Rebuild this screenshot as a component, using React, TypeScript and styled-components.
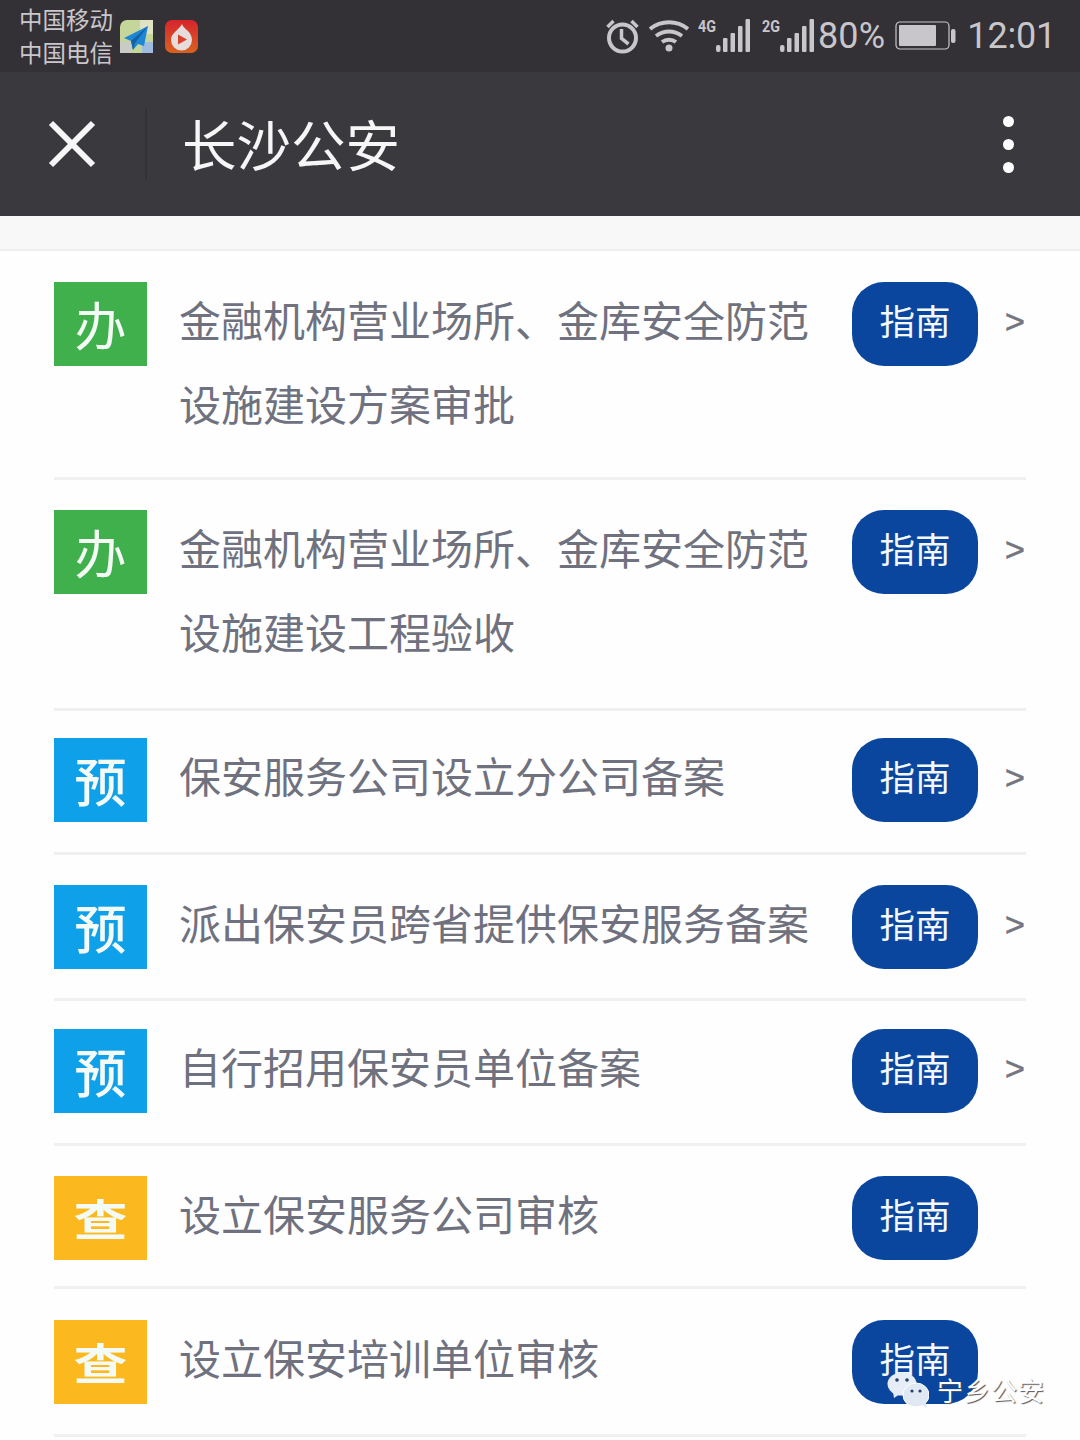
import React from "react";
import styled, { createGlobalStyle } from "styled-components";

const cjk = `"Noto Sans CJK SC", "Noto Sans", sans-serif`;

const GlobalStyle = createGlobalStyle`
  html, body {
    margin: 0;
    padding: 0;
    background: #fefefe;
    font-family: ${cjk};
  }
`;

const Page = styled.div`
  position: relative;
  width: 1080px;
  height: 1440px;
  overflow: hidden;
  background: #fefefe;
`;

const StatusBar = styled.div`
  display: flex;
  align-items: center;
  justify-content: space-between;
  height: 72px;
  padding: 0 24px 0 19px;
  box-sizing: border-box;
  background: #333036;
  color: #c8c6ca;
`;

const StatusLeft = styled.div`
  display: flex;
  align-items: center;
`;

const Carriers = styled.div`
  width: 101px;
  font-size: 23.5px;
  line-height: 33px;
  color: #c9c7cb;
`;

const AppIcon = styled.svg`
  display: block;
  width: 33px;
  height: 33px;
  margin-right: 12px;
`;

const StatusRight = styled.div`
  display: flex;
  align-items: center;
`;

const StatusIcon = styled.svg<{ $gap: number }>`
  display: block;
  margin-right: ${(p) => p.$gap}px;
  flex: none;
`;

const Percent = styled.span`
  font-family: Roboto, sans-serif;
  font-size: 36px;
  line-height: 72px;
  margin-right: 10px;
  letter-spacing: 0.2px;
`;

const Clock = styled.span`
  font-family: Roboto, sans-serif;
  font-size: 36px;
  line-height: 72px;
  letter-spacing: -0.2px;
`;

const NavBar = styled.div`
  display: flex;
  align-items: center;
  height: 144px;
  padding: 0 48px;
  box-sizing: border-box;
  background: #3a393e;
`;

const CloseIcon = styled.svg`
  display: block;
  width: 48px;
  height: 48px;
`;

const NavDivider = styled.div`
  width: 2px;
  height: 72px;
  margin: 0 35px 0 49px;
  background: #333237;
`;

const Title = styled.div`
  flex: 1;
  font-size: 54.5px;
  line-height: 72px;
  padding-bottom: 3px;
  color: #f6f6f7;
`;

const Dots = styled.div`
  display: flex;
  flex-direction: column;
  gap: 12px;
  margin-right: 18px;
`;

const Dot = styled.span`
  display: block;
  width: 11px;
  height: 11px;
  border-radius: 50%;
  background: #fff;
`;

const Gap = styled.div`
  height: 33px;
  background: #f8f8f8;
  border-bottom: 2px solid #eeeeee;
`;

const List = styled.div`
  padding: 0 54px;
`;

const Row = styled.div<{ $top: number; $bottom: number }>`
  display: flex;
  align-items: flex-start;
  padding: ${(p) => p.$top}px 0 ${(p) => p.$bottom}px;
  border-bottom: 3px solid #f0f0f1;
`;

const Tile = styled.div<{ $color: string }>`
  flex: none;
  width: 93px;
  height: 84px;
  margin-right: 32px;
  display: flex;
  align-items: center;
  justify-content: center;
  background: ${(p) => p.$color};
  color: #f4fbf6;
`;

const TileGlyph = styled.span<{ $squat?: boolean; $weight: number }>`
  font-size: ${(p) => (p.$squat ? 54 : 52)}px;
  font-weight: ${(p) => p.$weight};
  line-height: 82px;
  transform: ${(p) => (p.$squat ? "scaleY(0.8)" : "none")};
`;

const Label = styled.div`
  flex: none;
  width: 673px;
  font-size: 42px;
  line-height: 84px;
  color: #6f727e;
  margin: -5px 0 2px;
`;

const GuideButton = styled.div`
  flex: none;
  width: 126px;
  height: 84px;
  padding-bottom: 8px;
  box-sizing: border-box;
  border-radius: 32px;
  display: flex;
  align-items: center;
  justify-content: center;
  background: #0a469e;
  color: #f2f8fc;
  font-size: 35.5px;
  line-height: 76px;
`;

const Chevron = styled.div`
  flex: none;
  margin-left: 27px;
  font-family: "Liberation Sans", sans-serif;
  font-size: 34px;
  line-height: 78px;
  color: #74767f;
  -webkit-text-stroke: 0.6px #74767f;
`;

const Watermark = styled.div`
  position: absolute;
  left: 887px;
  top: 1372px;
  display: flex;
  align-items: center;
`;

const WatermarkText = styled.span`
  margin-left: 8px;
  font-size: 26px;
  line-height: 36px;
  letter-spacing: 1px;
  color: #fff;
  text-shadow: 1px 1px 1px #55555a;
`;

const rows = [
  { tag: "办", weight: 400, color: "#40b04c", lines: ["金融机构营业场所、金库安全防范", "设施建设方案审批"], top: 31, bottom: 30, arrow: true },
  { tag: "办", weight: 400, color: "#40b04c", lines: ["金融机构营业场所、金库安全防范", "设施建设工程验收"], top: 30, bottom: 33, arrow: true },
  { tag: "预", weight: 500, color: "#0fa0ea", lines: ["保安服务公司设立分公司备案"], top: 27, bottom: 30, arrow: true },
  { tag: "预", weight: 500, color: "#0fa0ea", lines: ["派出保安员跨省提供保安服务备案"], top: 30, bottom: 29, arrow: true },
  { tag: "预", weight: 500, color: "#0fa0ea", lines: ["自行招用保安员单位备案"], top: 28, bottom: 30, arrow: true },
  { tag: "查", weight: 700, color: "#fbb91f", lines: ["设立保安服务公司审核"], top: 30, bottom: 26, arrow: false },
  { tag: "查", weight: 700, color: "#fbb91f", lines: ["设立保安培训单位审核"], top: 31, bottom: 30, arrow: false },
];

function SignalIcon({ label, gap }: { label: string; gap: number }) {
  return (
    <StatusIcon $gap={gap} width="53" height="36" viewBox="0 0 53 36">
      <text x="0" y="14" fontFamily="Roboto, sans-serif" fontSize="16" fontWeight="700" fill="#c8c6ca" textLength="18" lengthAdjust="spacingAndGlyphs">
        {label}
      </text>
      <rect x="18" y="27" width="4.500" height="7" rx="2" fill="#c8c6ca" />
      <rect x="25" y="20" width="4.500" height="14" rx="1" fill="#c8c6ca" />
      <rect x="32.500" y="15" width="4.500" height="19" rx="1" fill="#c8c6ca" />
      <rect x="40" y="8" width="4.500" height="26" rx="1" fill="#c8c6ca" />
      <rect x="47.500" y="1" width="4.500" height="33" rx="1" fill="#c8c6ca" />
    </StatusIcon>
  );
}

export default function App() {
  return (
    <Page>
      <GlobalStyle />
      <StatusBar>
        <StatusLeft>
          <Carriers>
            中国移动
            <br />
            中国电信
          </Carriers>
          <AppIcon viewBox="0 0 33 33">
            <rect width="33" height="33" rx="7" fill="#c5d69a" />
            <path d="M20 0h13v14H20z" fill="#dfe3c4" />
            <path d="M0 22h12v11H0z" fill="#c9ccc4" />
            <path d="M22 22h11v11H22z" fill="#9dbce0" />
            <path d="M28 6 4 18l7 3 2 9 5-6 6 2z" fill="#1e86d6" />
            <path d="M28 6 11 21l2 9 2-7z" fill="#15609f" />
          </AppIcon>
          <AppIcon viewBox="0 0 33 33">
            <defs>
              <linearGradient id="flame" x1="0" y1="0" x2="0" y2="1">
                <stop offset="0" stopColor="#d6252d" />
                <stop offset="1" stopColor="#d9621f" />
              </linearGradient>
            </defs>
            <rect width="33" height="33" rx="7" fill="url(#flame)" />
            <path d="M17 4c1 5 10 7 10 16a10.500 10.500 0 0 1-21 0c0-7 7-9 11-16z" fill="#e6dcdc" />
            <path d="M13 14.500l9 5-9 5z" fill="#d8412a" />
          </AppIcon>
        </StatusLeft>
        <StatusRight>
          <StatusIcon $gap={10} width="33" height="36" viewBox="0 0 33 36">
            <circle cx="16.500" cy="20" r="13.500" fill="none" stroke="#c8c6ca" strokeWidth="4" />
            <path d="M15.500 11v9.500l7 5.500" fill="none" stroke="#c8c6ca" strokeWidth="3.500" />
            <path d="M1.500 9l6-6M31.500 9l-6-6" fill="none" stroke="#c8c6ca" strokeWidth="3.500" />
          </StatusIcon>
          <StatusIcon $gap={9} width="40" height="36" viewBox="0 0 40 36">
            <path d="M1 11c11-9 27-9 38 0M7 18c8-6 18-6 26 0M13 24c4-3 10-3 14 0" fill="none" stroke="#c8c6ca" strokeWidth="4" />
            <circle cx="20" cy="30" r="3.500" fill="#c8c6ca" />
          </StatusIcon>
          <SignalIcon label="4G" gap={11} />
          <SignalIcon label="2G" gap={3} />
          <Percent>80%</Percent>
          <StatusIcon $gap={11} width="61" height="32" viewBox="0 0 61 32">
            <rect x="1" y="2" width="53" height="27" rx="4" fill="none" stroke="#c8c6ca" strokeWidth="1.200" />
            <rect x="4" y="5" width="37" height="21" rx="1" fill="#c8c6ca" />
            <rect x="56" y="9" width="4.500" height="14" rx="2" fill="#c8c6ca" />
          </StatusIcon>
          <Clock>12:01</Clock>
        </StatusRight>
      </StatusBar>
      <NavBar>
        <CloseIcon viewBox="0 0 48 48">
          <path d="M3 3l42 42M45 3 3 45" fill="none" stroke="#f6f6f7" strokeWidth="6" />
        </CloseIcon>
        <NavDivider />
        <Title>长沙公安</Title>
        <Dots>
          <Dot />
          <Dot />
          <Dot />
        </Dots>
      </NavBar>
      <Gap />
      <List>
        {rows.map((row, i) => (
          <Row key={i} $top={row.top} $bottom={row.bottom}>
            <Tile $color={row.color}>
              <TileGlyph $weight={row.weight} $squat={row.tag === "查"}>
                {row.tag}
              </TileGlyph>
            </Tile>
            <Label>
              {row.lines.map((line) => (
                <div key={line}>{line}</div>
              ))}
            </Label>
            <GuideButton>指南</GuideButton>
            {row.arrow && <Chevron>&gt;</Chevron>}
          </Row>
        ))}
      </List>
      <Watermark>
        <svg width="42" height="36" viewBox="0 0 42 36">
          <ellipse cx="15" cy="12" rx="14.500" ry="11.500" fill="#e6edf6" />
          <path d="M6 20l1 6 6-4z" fill="#e6edf6" />
          <circle cx="10" cy="8" r="1.800" fill="#27406a" />
          <circle cx="20" cy="8" r="1.800" fill="#27406a" />
          <ellipse cx="29" cy="23" rx="13" ry="12" fill="#dfe8f3" stroke="#fff" strokeWidth="1" />
          <path d="M34 32l6 4-2-8z" fill="#dfe8f3" />
          <circle cx="25" cy="19" r="1.600" fill="#27406a" />
          <circle cx="33" cy="19" r="1.600" fill="#27406a" />
        </svg>
        <WatermarkText>宁乡公安</WatermarkText>
      </Watermark>
    </Page>
  );
}
